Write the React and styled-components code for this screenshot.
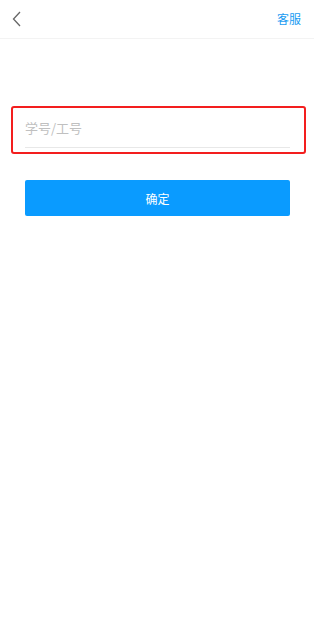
import styled, { createGlobalStyle } from "styled-components";

const GlobalStyle = createGlobalStyle`
  html, body {
    margin: 0;
    padding: 0;
    background: #fff;
  }
  body {
    font-family: "Noto Sans CJK SC", "Noto Sans", sans-serif;
  }
`;

const Page = styled.div`
  width: 314px;
  min-height: 625px;
  background: #fff;
`;

const Header = styled.div`
  height: 38px;
  display: flex;
  align-items: center;
  justify-content: space-between;
  padding: 0 13px 0 12px;
  border-bottom: 1px solid #f3f3f3;
`;

const Back = styled.button`
  border: 0;
  background: none;
  padding: 0;
  width: 12px;
  height: 18px;
  display: flex;
  align-items: center;
  cursor: pointer;
`;

const Service = styled.span`
  font-size: 12px;
  line-height: 14px;
  color: #1a9cf2;
`;

const Form = styled.div`
  padding: 67px 8px 0 11px;
`;

const FieldBox = styled.div`
  height: 44px;
  border: 2px solid #f31e1e;
  border-radius: 3px;
  padding: 0 14px 0 12px;
  display: flex;
`;

const Input = styled.input`
  flex: 1;
  min-width: 0;
  border: 0;
  border-bottom: 1px solid #e8e8e8;
  outline: none;
  font-family: inherit;
  font-size: 13px;
  color: #333;
  padding: 0;
  height: 39px;
  background: transparent;

  &::placeholder {
    color: #c0c0c0;
  }
`;

const Submit = styled.button`
  display: block;
  margin: 26px 0 0 14px;
  width: 265px;
  height: 36px;
  border: 0;
  border-radius: 2px;
  background: #0a9bff;
  color: #fff;
  font-family: inherit;
  font-size: 12px;
  cursor: pointer;
`;

export default function App() {
  return (
    <Page>
      <GlobalStyle />
      <Header>
        <Back aria-label="返回">
          <svg width="9" height="16" viewBox="0 0 9 16">
            <path d="M8 1 L1.5 8 L8 15" fill="none" stroke="#666" strokeWidth="1.3" />
          </svg>
        </Back>
        <Service>客服</Service>
      </Header>
      <Form>
        <FieldBox>
          <Input placeholder="学号/工号" />
        </FieldBox>
        <Submit>确定</Submit>
      </Form>
    </Page>
  );
}
